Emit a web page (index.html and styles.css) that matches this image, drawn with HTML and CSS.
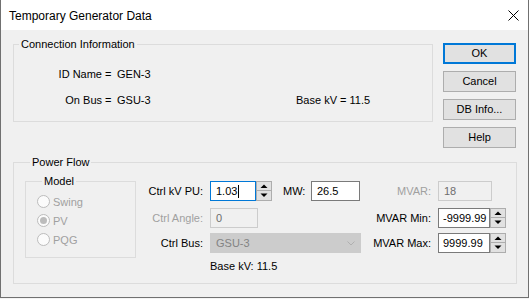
FILE: index.html
```html
<!DOCTYPE html>
<html>
<head>
<meta charset="utf-8">
<link rel="stylesheet" href="styles.css">
</head>
<body>
<div class="window">
  <div class="titlebar">
    <span class="title">Temporary Generator Data</span>
    <svg class="close" width="11" height="11" viewBox="0 0 11 11"><path d="M0.5 0.5 L10.5 10.5 M10.5 0.5 L0.5 10.5" stroke="#000" stroke-width="1" fill="none"/></svg>
  </div>
  <div class="content">
    <div class="top-row">
      <fieldset class="group conn">
        <legend>Connection Information</legend>
        <div class="conn-grid">
          <span class="c-lbl">ID Name</span><span class="c-eq">=</span><span class="c-val">GEN-3</span><span></span>
          <span class="c-lbl">On Bus</span><span class="c-eq">=</span><span class="c-val">GSU-3</span><span class="c-base">Base kV = 11.5</span>
        </div>
      </fieldset>
      <div class="buttons">
        <div class="btn default">OK</div>
        <div class="btn">Cancel</div>
        <div class="btn">DB Info...</div>
        <div class="btn">Help</div>
      </div>
    </div>
    <fieldset class="group pf">
      <legend>Power Flow</legend>
      <div class="pf-body">
        <fieldset class="group model">
          <legend>Model</legend>
          <div class="radio-row"><span class="radio"></span><span class="dis">Swing</span></div>
          <div class="radio-row"><span class="radio checked"></span><span class="dis">PV</span></div>
          <div class="radio-row"><span class="radio"></span><span class="dis">PQG</span></div>
        </fieldset>
        <div class="fields">
          <div class="row r1">
            <span class="la">Ctrl kV PU:</span>
            <div class="cb">
              <div class="edit focus w46">1.03<span class="caret"></span></div>
              <svg class="spin" width="16" height="20" viewBox="0 0 16 20"><rect x="0.5" y="0.5" width="15" height="19" fill="#e1e1e1" stroke="#adadad"/><line x1="1" y1="9.5" x2="15" y2="9.5" stroke="#adadad"/><path d="M8 3.5 L11.5 7 L4.5 7 Z" fill="#000"/><path d="M4.5 12.5 L11.5 12.5 L8 16 Z" fill="#000"/></svg>
              <span class="mw">MW:</span>
              <div class="edit w49">26.5</div>
            </div>
            <span class="lc dis">MVAR:</span>
            <div class="cd">
              <div class="edit disabled w54 p6">18</div>
            </div>
          </div>
          <div class="row r2">
            <span class="la dis">Ctrl Angle:</span>
            <div class="cb">
              <div class="edit disabled w48">0</div>
            </div>
            <span class="lc">MVAR Min:</span>
            <div class="cd">
              <div class="edit w52 p4">-9999.99</div>
              <svg class="spin" width="16" height="20" viewBox="0 0 16 20"><rect x="0.5" y="0.5" width="15" height="19" fill="#e1e1e1" stroke="#adadad"/><line x1="1" y1="9.5" x2="15" y2="9.5" stroke="#adadad"/><path d="M8 3.5 L11.5 7 L4.5 7 Z" fill="#000"/><path d="M4.5 12.5 L11.5 12.5 L8 16 Z" fill="#000"/></svg>
            </div>
          </div>
          <div class="row r3">
            <span class="la">Ctrl Bus:</span>
            <div class="cb">
              <div class="combo"><span>GSU-3</span><svg width="8" height="5" viewBox="0 0 8 5"><path d="M0.5 0.5 L4 4 L7.5 0.5" stroke="#b0b0b0" fill="none"/></svg></div>
            </div>
            <span class="lc">MVAR Max:</span>
            <div class="cd">
              <div class="edit w52 p4">9999.99</div>
              <svg class="spin" width="16" height="20" viewBox="0 0 16 20"><rect x="0.5" y="0.5" width="15" height="19" fill="#e1e1e1" stroke="#adadad"/><line x1="1" y1="9.5" x2="15" y2="9.5" stroke="#adadad"/><path d="M8 3.5 L11.5 7 L4.5 7 Z" fill="#000"/><path d="M4.5 12.5 L11.5 12.5 L8 16 Z" fill="#000"/></svg>
            </div>
          </div>
          <div class="row r4">
            <span class="la"></span>
            <div class="cb">Base kV: 11.5</div>
          </div>
        </div>
      </div>
    </fieldset>
  </div>
</div>
</body>
</html>
```
FILE: styles.css
```css
html, body {
  margin: 0;
  padding: 0;
  background: #f3f3f3;
}
body {
  font-family: "Liberation Sans", Arial, sans-serif;
  font-size: 11px;
  line-height: 16px;
  color: #000;
}
.window {
  box-sizing: border-box;
  width: 529px;
  height: 298px;
  border: 1px solid #707070;
  border-top: none;
  display: flex;
  flex-direction: column;
  background: #f0f0f0;
}
.titlebar {
  height: 30px;
  flex: none;
  background: #fff;
  display: flex;
  align-items: center;
  justify-content: space-between;
  padding-left: 8px;
  padding-right: 9px;
}
.title {
  font-size: 12px;
  line-height: 16px;
  padding-top: 1px;
}
.close {
  display: block;
}
.content {
  flex: 1;
  padding-left: 12px;
}
.top-row {
  display: flex;
  align-items: flex-start;
  margin-top: 7px;
}
.group {
  margin: 0;
  padding: 0;
  border: 1px solid #dcdcdc;
  min-width: 0;
}
.group > legend {
  margin-left: 5px;
  padding: 0 2px;
  line-height: 15px;
}
.conn {
  width: 420px;
  box-sizing: border-box;
  padding: 14px 0 13px 0;
}
.conn-grid {
  display: grid;
  grid-template-columns: 91px 12px 179px auto;
  row-gap: 10px;
}
.c-lbl {
  text-align: right;
  padding-right: 3px;
}
.buttons {
  margin-left: 10px;
  margin-top: 6px;
  display: flex;
  flex-direction: column;
  gap: 7px;
}
.btn {
  box-sizing: border-box;
  width: 73px;
  height: 21px;
  border: 1px solid #adadad;
  background: #e1e1e1;
  text-align: center;
  line-height: 19px;
}
.btn.default {
  border: 2px solid #0078d7;
  line-height: 17px;
}
.pf {
  width: 504px;
  box-sizing: border-box;
  margin-top: 7px;
  padding: 0 0 9px 11px;
}
.pf-body {
  display: flex;
  align-items: flex-start;
}
.model {
  width: 111px;
  box-sizing: border-box;
  margin-top: 4px;
  padding: 3px 0 8px 11px;
}
.radio-row {
  height: 19px;
  display: flex;
  align-items: center;
}
.radio {
  box-sizing: border-box;
  width: 13px;
  height: 13px;
  border: 1px solid #bcbcbc;
  border-radius: 50%;
  background: #fbfbfb;
  margin-right: 3px;
  display: flex;
  align-items: center;
  justify-content: center;
}
.radio.checked::after {
  content: "";
  width: 7px;
  height: 7px;
  border-radius: 50%;
  background: #bcbcbc;
}
.dis {
  color: #a0a0a0;
}
.fields {
  margin-top: 11px;
  display: flex;
  flex-direction: column;
}
.row {
  display: flex;
  align-items: center;
  height: 20px;
}
.r2 { margin-top: 7px; }
.r3 { margin-top: 5px; }
.r4 { margin-top: 5px; height: 16px; }
.la {
  width: 67px;
  text-align: right;
  margin-right: 7px;
  flex: none;
}
.cb {
  width: 151px;
  flex: none;
  display: flex;
  align-items: center;
}
.lc {
  width: 70px;
  text-align: right;
  margin-right: 7px;
  flex: none;
}
.cd {
  display: flex;
  align-items: center;
}
.edit {
  box-sizing: border-box;
  height: 20px;
  border: 1px solid #7a7a7a;
  background: #fff;
  padding-left: 5px;
  line-height: 18px;
  display: flex;
  align-items: center;
  white-space: nowrap;
}
.edit.focus {
  border-color: #0078d7;
}
.edit.disabled {
  border-color: #cccccc;
  background: #f0f0f0;
  color: #6d6d6d;
}
.p4 { padding-left: 4px; }
.p6 { padding-left: 5px; }
.w46 { width: 46px; }
.w48 { width: 48px; }
.w49 { width: 49px; }
.w52 { width: 52px; }
.w54 { width: 54px; }
.caret {
  display: inline-block;
  width: 0;
  height: 13px;
  border-left: 1px solid #000;
  margin-left: 1px;
}
.spin {
  display: block;
  flex: none;
}
.mw {
  width: 28px;
  margin-left: 11px;
}
.combo {
  box-sizing: border-box;
  width: 151px;
  height: 20px;
  border: 1px solid #cccccc;
  background: #cccccc;
  color: #838383;
  padding-left: 5px;
  padding-right: 5px;
  display: flex;
  align-items: center;
  justify-content: space-between;
}
.combo svg {
  display: block;
}
```
